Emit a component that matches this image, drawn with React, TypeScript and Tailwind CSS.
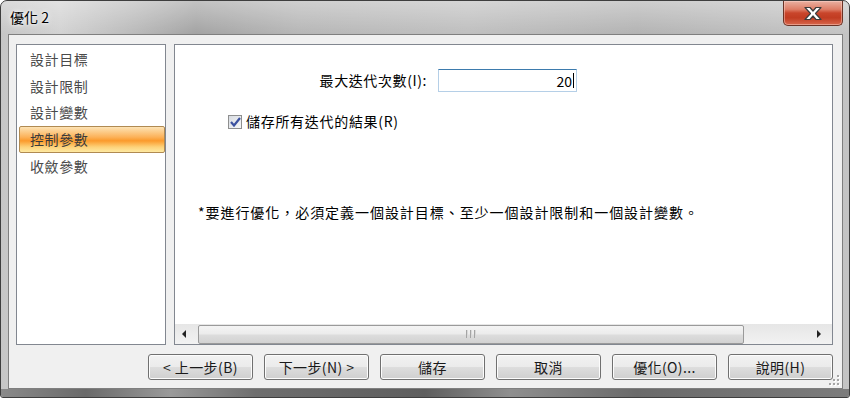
import React from "react";

const font = { fontFamily: '"Noto Sans CJK TC", "Noto Sans", sans-serif' };

const navItems = ["設計目標", "設計限制", "設計變數", "控制參數", "收斂參數"];
const buttons = ["< 上一步(B)", "下一步(N) >", "儲存", "取消", "優化(O)...", "說明(H)"];

function CloseButton() {
    return (
        <div className="mr-[6px] flex h-[25px] w-[60px] items-center justify-center rounded-b-[5px] border border-t-0 border-[#6b3326] bg-[linear-gradient(to_bottom,#eab1a2_0%,#de7d66_35%,#c9452b_50%,#c13c22_70%,#d8674c_100%)] shadow-[inset_0_0_0_1px_rgba(255,220,210,0.45)]">
            <svg width="22" height="15" viewBox="0 0 22 15">
                <path
                    d="M3 1.5 H8 L11 5 L14 1.5 H19 L13.5 7.5 L19 13.5 H14 L11 10 L8 13.5 H3 L8.5 7.5 Z"
                    fill="#ffffff"
                    stroke="#3c3c3c"
                    strokeWidth="1.2"
                    strokeLinejoin="round"
                />
            </svg>
        </div>
    );
}

function NavList() {
    return (
        <div className="h-[301px] w-[150px] border border-[#828790] bg-white pt-[1px]">
            {navItems.map((item, i) =>
                i === 3 ? (
                    <div
                        key={item}
                        className="ml-[2px] flex h-[26.75px] items-center rounded-[2px] border border-[#b08a52] bg-[linear-gradient(to_bottom,#fde3b4_0%,#fcb25a_40%,#fb9a2c_55%,#fdd27a_80%,#fee9a2_100%)] pl-[10px] text-[14px] tracking-[0.6px] text-[#3a3a3a]"
                    >
                        {item}
                    </div>
                ) : (
                    <div key={item} className="flex h-[26.75px] items-center pl-[13px] text-[14px] tracking-[0.6px] text-[#4a4a4a]">
                        {item}
                    </div>
                )
            )}
        </div>
    );
}

function ScrollBar() {
    return (
        <div className="flex h-[20px] items-center bg-[linear-gradient(to_bottom,#e6e6e6,#f2f2f2)]">
            <div className="flex w-[23px] items-center justify-center pr-[4px]">
                <svg width="5" height="8" viewBox="0 0 5 8">
                    <path d="M4 0 L0 4 L4 8 Z" fill="#222" />
                </svg>
            </div>
            <div className="flex h-[19px] w-[546px] items-center justify-center rounded-[2px] border border-[#9a9a9a] bg-[linear-gradient(to_bottom,#f4f4f4_0%,#ececec_45%,#dcdcdc_55%,#d2d2d2_100%)]">
                <div className="flex gap-[2px]">
                    <div className="h-[8px] w-[2px] bg-[linear-gradient(to_right,#8a8a8a,#f4f4f4)]" />
                    <div className="h-[8px] w-[2px] bg-[linear-gradient(to_right,#8a8a8a,#f4f4f4)]" />
                    <div className="h-[8px] w-[2px] bg-[linear-gradient(to_right,#8a8a8a,#f4f4f4)]" />
                </div>
            </div>
            <div className="flex flex-1 items-center justify-end pr-[10px]">
                <svg width="5" height="8" viewBox="0 0 5 8">
                    <path d="M0 0 L4 4 L0 8 Z" fill="#222" />
                </svg>
            </div>
        </div>
    );
}

function Checkbox() {
    return (
        <div className="flex h-[14px] w-[14px] items-center justify-center border border-[#8e8f8f] bg-[linear-gradient(135deg,#d8dce2,#f6f7f8)]">
            <svg width="11" height="10" viewBox="0 0 11 10">
                <path d="M1 5 L4 8.5 L10 1" fill="none" stroke="#3b51a0" strokeWidth="2.2" />
            </svg>
        </div>
    );
}

function SettingsPanel() {
    return (
        <div className="flex h-[301px] w-[659px] flex-col border border-[#828790] bg-white">
            <div className="flex-1 text-[14px] text-black">
                <div className="mt-[24px] flex items-center">
                    <div className="w-[252px] text-right tracking-[0.6px]">最大迭代次數(I):</div>
                    <div className="ml-[11px] flex h-[23px] w-[139px] items-center justify-end border border-[#b5cfe7] border-t-[#3d7bad] pr-[2px] leading-none">
                        20<span className="ml-[1px] inline-block h-[15px] w-[1px] bg-black" />
                    </div>
                </div>
                <div className="mt-[19px] ml-[53px] flex items-center gap-[4px]">
                    <Checkbox />
                    <span className="tracking-[0.7px]">儲存所有迭代的結果(R)</span>
                </div>
                <div className="mt-[70px] ml-[23px] tracking-[0.95px]">
                    *要進行優化，必須定義一個設計目標、至少一個設計限制和一個設計變數。
                </div>
            </div>
            <ScrollBar />
        </div>
    );
}

function ResizeGrip() {
    const dots = [
        [8, 0],
        [4, 4],
        [8, 4],
        [0, 8],
        [4, 8],
        [8, 8],
    ];
    return (
        <svg width="11" height="11" viewBox="0 0 11 11" className="absolute bottom-[2px] right-[2px]">
            {dots.map(([x, y]) => (
                <g key={`${x}-${y}`}>
                    <rect x={x + 1} y={y + 1} width="2" height="2" fill="#ffffff" />
                    <rect x={x} y={y} width="2" height="2" fill="#a5a5a5" />
                </g>
            ))}
        </svg>
    );
}

export default function App() {
    return (
        <div className="h-[398px] w-[850px] bg-white" style={font}>
            <div className="flex h-[398px] w-[850px] flex-col overflow-hidden rounded-t-[7px] rounded-b-[3px] border border-[#3e3e3e] bg-[linear-gradient(to_right,#c6c6c6_0%,#d2d2d2_7%,#b9b9b9_16%,#a3a3a3_23%,#b6b6b6_35%,#bfbfbf_55%,#b3b3b3_75%,#c4c4c4_100%)]">
                <div className="flex h-[33px] items-start justify-between bg-[linear-gradient(to_bottom,rgba(255,255,255,0.35),rgba(255,255,255,0))]">
                    <div className="pl-[9px] pt-[7px] text-[14px] leading-[18px] text-black [text-shadow:0_0_6px_#ffffff,0_0_3px_#ffffff]">
                        優化 2
                    </div>
                    <CloseButton />
                </div>
                <div className="relative ml-[7px] h-[355px] w-[835px] border border-[#7f7f7f] bg-[#f0f0f0] px-[7px] pt-[9px]">
                    <div className="flex gap-[8px]">
                        <NavList />
                        <SettingsPanel />
                    </div>
                    <div className="mt-[9px] flex justify-end gap-[11px] pr-[2px]">
                        {buttons.map((b) => (
                            <div
                                key={b}
                                className="flex h-[26px] w-[105px] items-center justify-center rounded-[3px] border border-[#707070] bg-[linear-gradient(to_bottom,#f2f2f2_0%,#ebebeb_48%,#dddddd_52%,#cfcfcf_100%)] text-[14px] tracking-[0.4px] text-[#1a1a1a] shadow-[inset_0_0_0_1px_#fcfcfc]"
                            >
                                {b}
                            </div>
                        ))}
                    </div>
                    <ResizeGrip />
                </div>
                <div className="h-[8px] flex-1 bg-[linear-gradient(to_right,#8a8a8a_0%,#6a6a6a_10%,#9a9a9a_20%,#6e6e6e_30%,#5e5e5e_50%,#8f8f8f_60%,#6a6a6a_75%,#7c7c7c_100%)]" />
            </div>
        </div>
    );
}
